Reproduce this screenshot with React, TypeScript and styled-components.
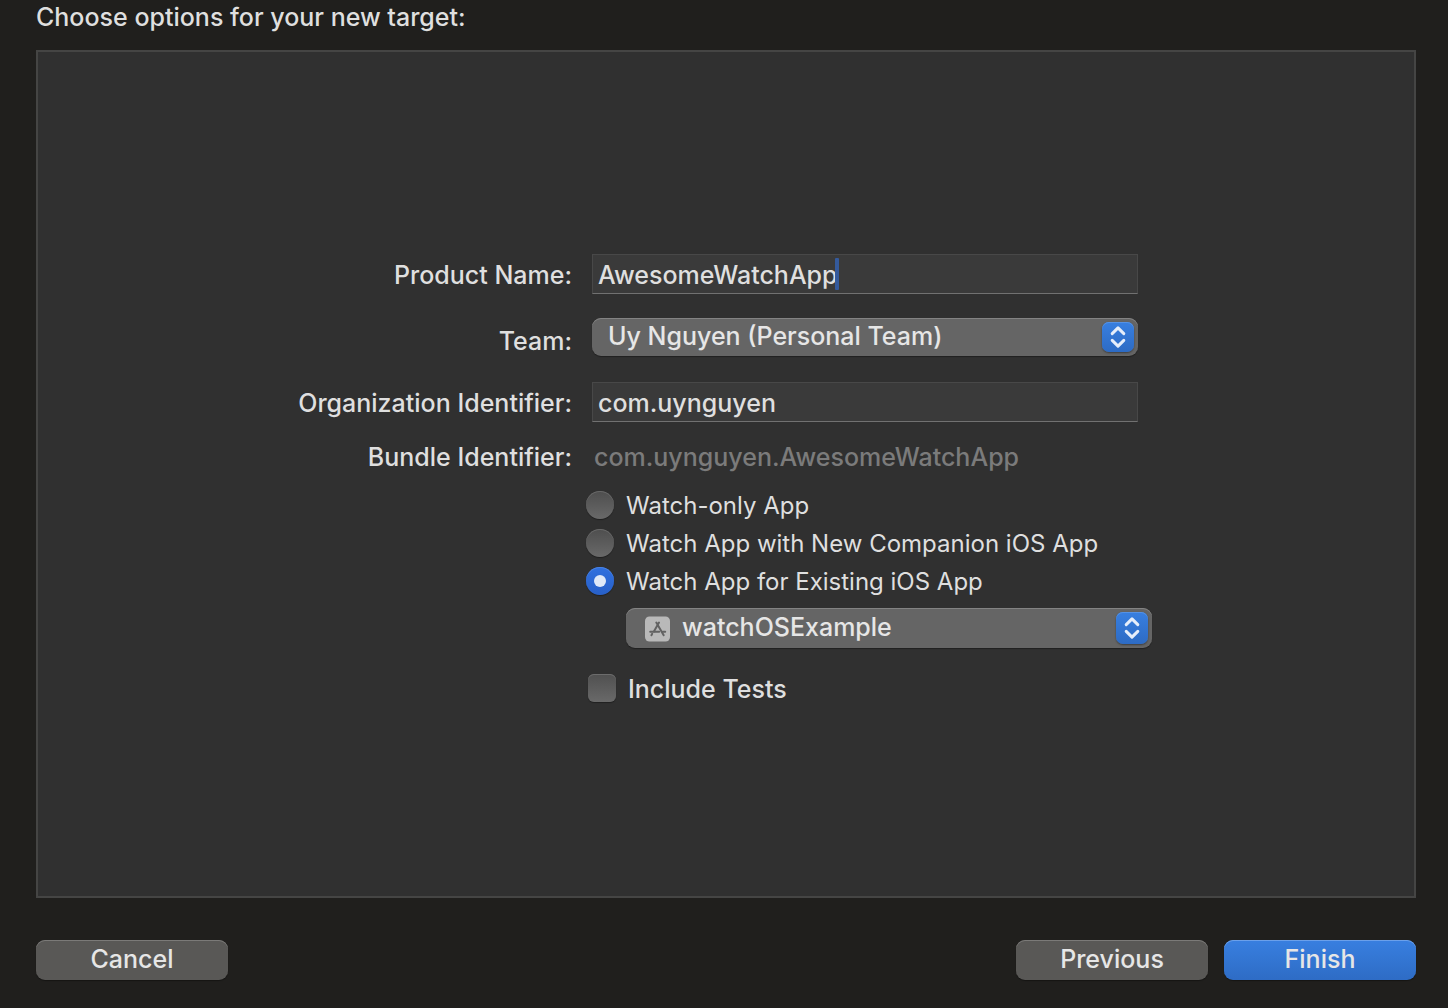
import React, { useState } from "react";
import styled, { createGlobalStyle, css } from "styled-components";

const GlobalStyle = createGlobalStyle`
  *, *::before, *::after { box-sizing: border-box; }
  body {
    margin: 0;
    background: #201f1d;
    color: #dfdfdf;
    font-family: Inter, "Liberation Sans", sans-serif;
    font-size: 25px;
    font-weight: 500;
    line-height: 32px;
  }
  button, input, select { font: inherit; color: inherit; margin: 0; }
`;

const Sheet = styled.form`
  min-height: 100vh;
  display: flex;
  flex-direction: column;
  padding: 0 32px 28px 36px;
`;

const Title = styled.h1`
  margin: 0 0 16px;
  font-size: 25px;
  line-height: 34px;
  font-weight: 500;
`;

const Panel = styled.main`
  flex: 1;
  display: flex;
  align-items: center;
  justify-content: center;
  padding: 8px 8px 0 0;
  background: #303030;
  border: 2px solid #454544;
`;

const Options = styled.div`
  display: flex;
  flex-direction: column;
`;

const Row = styled.div<{ $gap?: number }>`
  display: grid;
  grid-template-columns: 280px 560px;
  column-gap: 20px;
  margin-top: ${(p) => p.$gap ?? 0}px;
`;

const labelText = css`
  line-height: 42px;
  text-align: right;
  white-space: nowrap;
`;

const RowLabel = styled.label<{ $lowered?: boolean }>`
  ${labelText}
  height: 40px;
  padding-top: ${(p) => (p.$lowered ? 2 : 0)}px;
`;

const TextBox = styled.div`
  display: flex;
  align-items: center;
  width: 546px;
  height: 40px;
  padding: 2px 5px 0;
  background: #3a3a3a;
  border: 1px solid #484848;
  border-bottom-color: #717171;
`;

const TextInput = styled.input<{ $hug?: boolean }>`
  ${(p) => (p.$hug ? "field-sizing: content;" : "flex: 1;")}
  min-width: 0;
  height: 32px;
  padding: 0;
  border: 0;
  outline: 0;
  background: transparent;
  font-weight: 450;
  caret-color: transparent;
`;

const Caret = styled.span`
  width: 4px;
  height: 32px;
  margin: 0 0 2px -3px;
  border-radius: 1px;
  background: #345a9c;
`;

const BundleLabel = styled.label`
  ${labelText}
  line-height: 38px;
`;

const BundleValue = styled.output`
  padding-left: 2px;
  line-height: 38px;
  font-weight: 450;
  color: #7b7b7b;
`;

const SelectWrap = styled.div<{ $width: number; $height: number }>`
  position: relative;
  width: ${(p) => p.$width}px;
  height: ${(p) => p.$height}px;
`;

const Select = styled.select<{ $inset: number }>`
  appearance: none;
  width: 100%;
  height: 100%;
  padding: 0 48px 2px ${(p) => p.$inset}px;
  border: 0;
  border-radius: 9px;
  outline: 0;
  background: #656565;
  color: #e6e6e6;
  font-weight: 450;
  box-shadow: inset 0 1px 0 #838383, 0 1px 1px rgba(0, 0, 0, 0.35);
`;

const Stepper = styled.span`
  position: absolute;
  top: 4px;
  right: 4px;
  bottom: 4px;
  width: 32px;
  display: flex;
  align-items: center;
  justify-content: center;
  border-radius: 7px;
  background: linear-gradient(#387fe0, #2d6bc4);
  box-shadow: inset 0 1px 0 #5592e5, 0 1px 2px rgba(0, 0, 0, 0.4);
  pointer-events: none;
`;

const AppBadge = styled.span`
  position: absolute;
  top: 8px;
  left: 19px;
  display: flex;
  pointer-events: none;
`;

const Choices = styled.div`
  grid-column: 2;
  margin-left: -6px;
`;

const OptionText = styled.span`
  padding-top: 2px;
`;

const Choice = styled.label`
  display: flex;
  align-items: center;
  gap: 12px;
  height: 38px;
  font-size: 24px;
  font-weight: 400;
`;

const Radio = styled.input`
  appearance: none;
  flex: none;
  display: grid;
  place-items: center;
  width: 28px;
  height: 28px;
  border-radius: 50%;
  background: linear-gradient(#4e4e4e, #696969);
  box-shadow: inset 0 1px 0 #686868, 0 1px 1px rgba(0, 0, 0, 0.35);

  &:checked {
    background: linear-gradient(#3070df, #2860c8);
    box-shadow: inset 0 1px 0 #4a82e2, 0 1px 1px rgba(0, 0, 0, 0.35);
  }
  &:checked::before {
    content: "";
    width: 12px;
    height: 12px;
    border-radius: 50%;
    background: #e0e9f8;
  }
`;

const Existing = styled.div`
  margin: 8px 0 0 40px;
`;

const Tests = styled.label`
  grid-column: 2;
  display: flex;
  align-items: center;
  gap: 12px;
  height: 28px;
  margin-left: -4px;
  font-weight: 450;
`;

const Checkbox = styled.input`
  appearance: none;
  flex: none;
  width: 28px;
  height: 28px;
  border-radius: 6px;
  background: linear-gradient(#505050, #696969);
  box-shadow: inset 0 1px 0 #6c6c6c, 0 1px 1px rgba(0, 0, 0, 0.35);

  &:checked {
    background: linear-gradient(#3070df, #2860c8);
  }
`;

const Footer = styled.footer`
  display: flex;
  justify-content: space-between;
  margin-top: 42px;
`;

const ButtonGroup = styled.div`
  display: flex;
  gap: 16px;
`;

const Button = styled.button<{ $primary?: boolean }>`
  width: 192px;
  height: 40px;
  padding: 0 0 2px;
  border: 0;
  border-radius: 9px;
  color: #e6e6e6;
  font-weight: 450;
  background: ${(p) => (p.$primary ? "linear-gradient(#387fe0, #2e6cc5)" : "#595856")};
  box-shadow: inset 0 1px 0 ${(p) => (p.$primary ? "#6ba0ea" : "#7b7a78")},
    0 1px 1px rgba(0, 0, 0, 0.35);
`;

const Chevrons = () => (
  <Stepper>
    <svg width="16" height="24" viewBox="0 0 16 24" fill="none" stroke="#e6eefa"
      strokeWidth="3" strokeLinecap="round" strokeLinejoin="round" aria-hidden="true">
      <path d="M2.2 8.6 8 2.9l5.8 5.7M2.2 15.4 8 21.1l5.8-5.7" />
    </svg>
  </Stepper>
);

const AppStoreIcon = () => (
  <AppBadge>
    <svg width="26" height="26" viewBox="0 0 26 26" aria-hidden="true">
      <rect x="0" y="0.5" width="25" height="25" rx="4.5" fill="#b9b9b9" />
      <g fill="none" stroke="#626262" strokeWidth="2" strokeLinecap="round">
        <path d="M11.3 6.6 18.7 19.2M14 6.6 8.9 15.4M7.2 17.8 6.4 19.2" />
        <path d="M5.2 15.8h9M17.8 15.8h2.4" />
      </g>
    </svg>
  </AppBadge>
);

const kinds = [
  "Watch-only App",
  "Watch App with New Companion iOS App",
  "Watch App for Existing iOS App",
];

export default function App() {
  const [name, setName] = useState("AwesomeWatchApp");
  const [org, setOrg] = useState("com.uynguyen");
  const [kind, setKind] = useState(kinds[2]);

  return (
    <>
      <GlobalStyle />
      <Sheet onSubmit={(e) => e.preventDefault()}>
        <Title>Choose options for your new target:</Title>
        <Panel>
          <Options>
            <Row>
              <RowLabel htmlFor="product">Product Name:</RowLabel>
              <TextBox>
                <TextInput id="product" $hug value={name} spellCheck={false}
                  onChange={(e) => setName(e.target.value)} />
                <Caret />
              </TextBox>
            </Row>
            <Row $gap={24}>
              <RowLabel htmlFor="team" $lowered>Team:</RowLabel>
              <SelectWrap $width={546} $height={38}>
                <Select id="team" $inset={16}>
                  <option>Uy Nguyen (Personal Team)</option>
                </Select>
                <Chevrons />
              </SelectWrap>
            </Row>
            <Row $gap={24}>
              <RowLabel htmlFor="org">Organization Identifier:</RowLabel>
              <TextBox>
                <TextInput id="org" value={org} spellCheck={false}
                  onChange={(e) => setOrg(e.target.value)} />
              </TextBox>
            </Row>
            <Row $gap={16}>
              <BundleLabel htmlFor="bundle">Bundle Identifier:</BundleLabel>
              <BundleValue id="bundle">{`${org}.${name}`}</BundleValue>
            </Row>
            <Row $gap={10}>
              <Choices>
                {kinds.map((k) => (
                  <Choice key={k}>
                    <Radio type="radio" name="kind" checked={kind === k}
                      onChange={() => setKind(k)} />
                    <OptionText>{k}</OptionText>
                  </Choice>
                ))}
                <Existing>
                  <SelectWrap $width={526} $height={40}>
                    <Select $inset={56} aria-label="Existing iOS App">
                      <option>watchOSExample</option>
                    </Select>
                    <AppStoreIcon />
                    <Chevrons />
                  </SelectWrap>
                </Existing>
              </Choices>
            </Row>
            <Row $gap={26}>
              <Tests>
                <Checkbox type="checkbox" />
                <OptionText>Include Tests</OptionText>
              </Tests>
            </Row>
          </Options>
        </Panel>
        <Footer>
          <Button type="button">Cancel</Button>
          <ButtonGroup>
            <Button type="button">Previous</Button>
            <Button type="submit" $primary>Finish</Button>
          </ButtonGroup>
        </Footer>
      </Sheet>
    </>
  );
}
